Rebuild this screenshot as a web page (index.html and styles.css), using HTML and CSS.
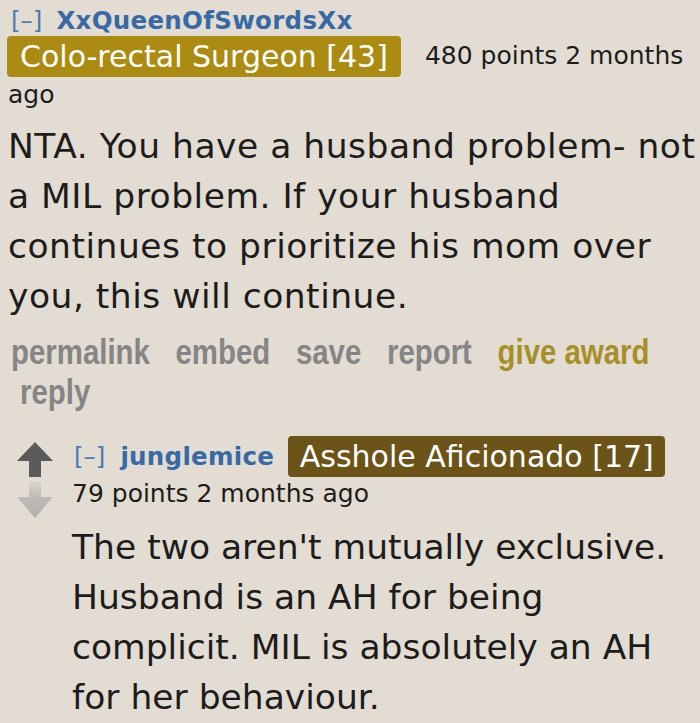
FILE: index.html
```html
<!DOCTYPE html>
<html>
<head>
<meta charset="utf-8">
<link rel="stylesheet" href="styles.css">
</head>
<body>
<div class="page">
  <div class="comment top">
    <div class="tagline">
      <div class="line1"><a class="expand">[–]</a><a class="author">XxQueenOfSwordsXx</a></div>
      <div class="line2">
        <span class="flair gold">Colo-rectal Surgeon [43]</span>
        <span class="meta first">480 points 2 months</span>
      </div>
      <div class="meta ago">ago</div>
    </div>
    <div class="usertext">
      <p>NTA. You have a husband problem- not<br>a MIL problem. If your husband<br>continues to prioritize his mom over<br>you, this will continue.</p>
    </div>
    <div class="buttons">
      <a class="btn">permalink</a>
      <a class="btn">embed</a>
      <a class="btn">save</a>
      <a class="btn">report</a>
      <a class="btn award">give award</a>
    </div>
    <div class="buttons second">
      <a class="btn">reply</a>
    </div>
  </div>

  <div class="comment child">
    <div class="midcol">
      <svg class="arrow" width="38" height="36" viewBox="0 0 38 36">
        <polygon points="19,0 37,19 25,19 25,35 13,35 13,19 1,19" fill="#5b5b5b"/>
      </svg>
      <svg class="arrow" width="38" height="38" viewBox="0 0 38 38">
        <defs>
          <linearGradient id="dg" x1="0" y1="0" x2="0" y2="1">
            <stop offset="0" stop-color="#d9d6d1"/>
            <stop offset="0.45" stop-color="#bdbbb8"/>
            <stop offset="1" stop-color="#b2b1af"/>
          </linearGradient>
        </defs>
        <polygon points="13,0 25,0 25,16 37,16 19,37 1,16 13,16" fill="url(#dg)"/>
      </svg>
    </div>
    <div class="entry">
      <div class="head">
        <a class="expand">[–]</a>
        <a class="author">junglemice</a>
        <span class="flair brown">Asshole Aficionado [17]</span>
      </div>
      <div class="meta">79 points 2 months ago</div>
      <div class="usertext">
        <p>The two aren't mutually exclusive.<br>Husband is an AH for being<br>complicit. MIL is absolutely an AH<br>for her behaviour.</p>
      </div>
    </div>
  </div>
</div>
</body>
</html>
```

FILE: styles.css
```css
html, body {
  margin: 0;
  padding: 0;
  background: #e3dcd2;
}
body {
  font-family: Verdana, "DejaVu Sans", sans-serif;
  color: #1c1c1c;
  width: 700px;
  height: 723px;
  overflow: hidden;
}
.page {
  padding: 8px 0 0 8px;
}
.tagline {
  display: flex;
  flex-direction: column;
}
.line1 {
  height: 30px;
  line-height: 30px;
  font-size: 24.5px;
  padding-left: 3px;
  margin-top: -2px;
}
.line1 .author {
  margin-left: 14px;
}
.expand {
  color: #4b7cb2;
  font-weight: normal;
}
.author {
  color: #376aa4;
  font-weight: bold;
  letter-spacing: 0.3px;
}
.line2 {
  display: flex;
  align-items: flex-start;
  margin-left: -1px;
}
.flair {
  display: inline-block;
  color: #fff;
  font-size: 30px;
  line-height: 41px;
  height: 41px;
  padding: 0 13px;
  border-radius: 4px;
  white-space: nowrap;
}
.gold {
  background: #ab8b12;
}
.brown {
  background: #6c5318;
}
.meta {
  font-size: 25px;
  line-height: 30px;
  color: #1c1c1c;
}
.meta.first {
  margin-left: 24px;
  margin-top: 5px;
}
.meta.ago {
  margin-top: 3px;
}
.usertext p {
  margin: 0;
  font-size: 34.5px;
  line-height: 50px;
  letter-spacing: 0.5px;
}
.top .usertext {
  margin-top: 11px;
}
.buttons {
  display: flex;
  gap: 30.5px;
  width: max-content;
  font-family: "Liberation Sans", Arial, sans-serif;
  font-weight: bold;
  font-size: 35px;
  line-height: 40px;
  margin-left: 3px;
  margin-top: 11px;
  transform: scaleX(0.84);
  transform-origin: left center;
}
.buttons.second {
  margin-left: 12px;
  margin-top: 0;
}
.btn {
  color: #858585;
}
.btn.award {
  color: #a68f28;
}
.child {
  display: flex;
  margin-top: 24px;
}
.midcol {
  display: flex;
  flex-direction: column;
  gap: 3px;
  padding: 6px 0 0 8px;
  width: 45px;
}
.arrow {
  display: block;
}
.entry {
  margin-left: 11px;
  display: flex;
  flex-direction: column;
}
.head {
  display: flex;
  align-items: center;
  height: 41px;
  font-size: 24.5px;
}
.head .expand {
  margin-left: 2px;
}
.head .author {
  margin-left: 15px;
}
.head .flair {
  margin-left: 14px;
  padding: 0 11.5px;
}
.entry .meta {
  margin-top: 2px;
}
.entry .usertext {
  margin-top: 13px;
}
.entry .usertext p {
  font-size: 34.5px;
  letter-spacing: 0;
}
```
